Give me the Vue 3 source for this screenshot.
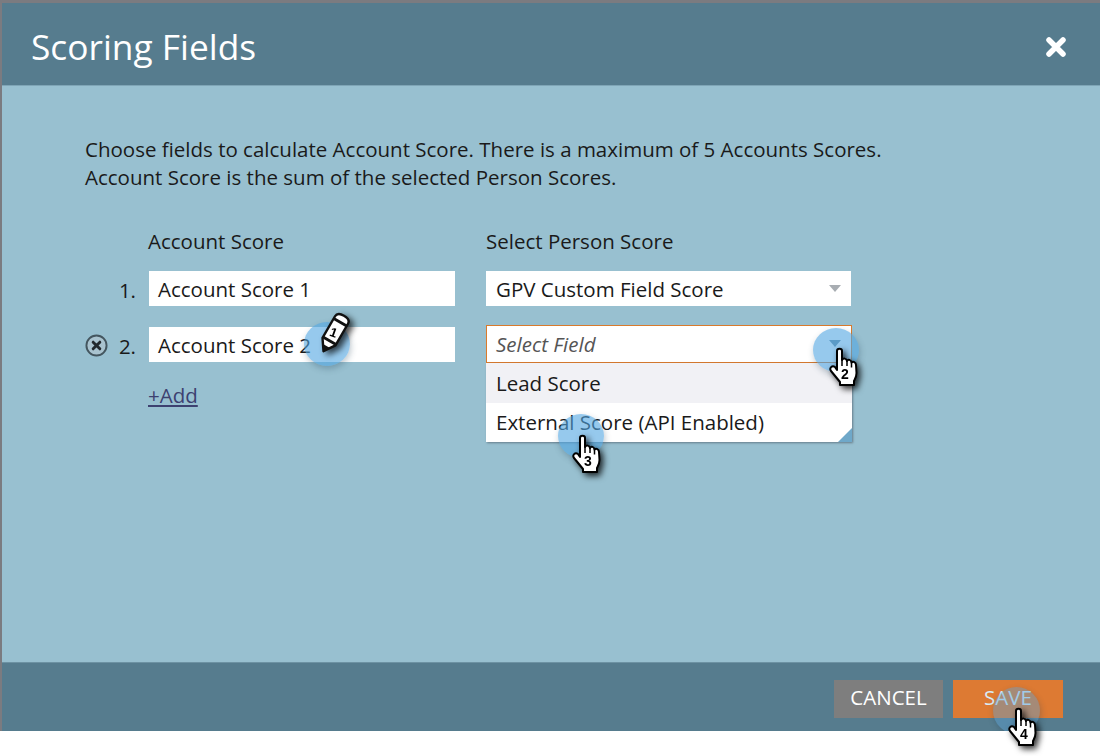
<script setup>
const fieldRows = [
  { n: '1.', value: 'Account Score 1', removable: false },
  { n: '2.', value: 'Account Score 2', removable: true },
]
const handPath = 'M8 4C8 1 13 1 13 4V13C14 11 17.500 11 18 14C19 12 22 12.500 22.500 15.500C24 14 27 15 27 18L27.500 26C27.500 30 26 32 25 34V38H11V35L2 24C0 21 3 18 6 20L8 23Z'
const hands = [
  { cls: 'hand-two', label: '2' },
  { cls: 'hand-three', label: '3' },
  { cls: 'hand-four', label: '4' },
]
</script>

<template>
  <div class="page">
    <div class="dialog">
      <header class="head">
        <h1 class="title">Scoring Fields</h1>
        <svg class="close" viewBox="0 0 22 22" aria-label="Close">
          <path d="M4 4 18 18M18 4 4 18" stroke="#fff" stroke-width="5.500" stroke-linecap="round" />
        </svg>
      </header>

      <main class="body">
        <p class="intro">
          Choose fields to calculate Account Score. There is a maximum of 5 Accounts Scores.<br />
          Account Score is the sum of the selected Person Scores.
        </p>

        <div class="form">
          <div class="col-left">
            <div class="label label-left">Account Score</div>
            <div v-for="row in fieldRows" :key="row.n" class="row">
              <svg v-if="row.removable" class="remove" viewBox="0 0 24 24">
                <circle cx="12" cy="12" r="10.500" fill="#a9c3cf" stroke="#44565f" stroke-width="2" />
                <path d="M8.500 8.500l7 7M15.500 8.500l-7 7" stroke="#22292e" stroke-width="3" stroke-linecap="round" />
              </svg>
              <span class="num">{{ row.n }}</span>
              <div class="input">{{ row.value }}</div>
            </div>
            <a class="add">+Add</a>
          </div>

          <div class="col-right">
            <div class="label">Select Person Score</div>
            <div class="select">
              <span>GPV Custom Field Score</span>
              <i class="caret"></i>
            </div>
            <div class="select select-open">
              <em>Select Field</em>
              <i class="caret"></i>
            </div>
            <ul class="menu">
              <li class="opt opt-hover">Lead Score</li>
              <li class="opt">External Score (API Enabled)</li>
              <li class="corner"></li>
            </ul>
          </div>
        </div>
      </main>

      <footer class="foot">
        <button class="btn cancel">CANCEL</button>
        <button class="btn save">SAVE</button>
      </footer>

      <span class="spot spot-one"></span>
      <span class="spot spot-two"></span>
      <span class="spot spot-three"></span>
      <span class="spot spot-four"></span>
    </div>

    <div class="pencil">
      <svg viewBox="0 0 36 44" width="36" height="44">
        <g transform="rotate(30 18 22)">
          <path d="M10.500 7c0-4 3.500-5 7.500-5s7.500 1 7.500 5v25l-7.500 11-7.500-11z" fill="#fff" stroke="#111" stroke-width="2.400" stroke-linejoin="round" />
          <path d="M10.500 9.500h15M10.500 31h15" stroke="#111" stroke-width="2.800" />
          <path d="M14 37l4 6 4-6z" fill="#111" />
        </g>
      </svg>
      <span class="pencil-num">1</span>
    </div>

    <div v-for="h in hands" :key="h.label" class="hand" :class="h.cls">
      <svg viewBox="0 0 30 40" width="30" height="40">
        <path :d="handPath" fill="#fff" stroke="#000" stroke-width="2" stroke-linejoin="round" />
        <path d="M13 13v6M18 14v5M22.500 15.500v5" stroke="#000" stroke-width="1.500" />
      </svg>
      <span class="hand-num">{{ h.label }}</span>
    </div>
  </div>
</template>

<style>
html, body { margin: 0; background: #fff; }
</style>

<style scoped>
.page {
  position: relative;
  width: 1100px;
  height: 756px;
  overflow: hidden;
  background: #fff;
  font-family: "Open Sans", "Liberation Sans", sans-serif;
  color: #1a1a1a;
}
.dialog {
  position: relative;
  overflow: hidden;
  box-sizing: border-box;
  width: 1100px;
  height: 731px;
  padding: 3px 0 0 2px;
  background: #7b7b80;
  display: flex;
  flex-direction: column;
}
.head {
  height: 83px;
  flex: none;
  background: #567c8e;
  display: flex;
  align-items: center;
  justify-content: space-between;
  padding: 5px 33px 0 29px;
  border-bottom: 1px solid #7fa5b6;
  box-sizing: border-box;
}
.title {
  margin: 0;
  font-size: 35.300px;
  font-weight: 400;
  color: #fff;
  line-height: 1;
}
.close { width: 22px; height: 22px; }
.body {
  flex: 1;
  background: #98c0d0;
  padding: 49px 0 0 83px;
  box-sizing: border-box;
  min-height: 0;
}
.intro {
  margin: 0;
  font-size: 20.500px;
  line-height: 28px;
}
.form {
  display: flex;
  margin-top: 37px;
}
.col-left { width: 401px; flex: none; }
.col-right { width: 366px; flex: none; position: relative; }
.label {
  font-size: 20.500px;
  line-height: 26px;
  height: 28px;
  margin-bottom: 15px;
}
.label-left { padding-left: 63px; }
.row {
  position: relative;
  display: flex;
  align-items: center;
  height: 35px;
  margin-bottom: 21px;
}
.remove {
  position: absolute;
  left: 0;
  top: 7px;
  width: 23px;
  height: 23px;
}
.num {
  width: 64px;
  flex: none;
  box-sizing: border-box;
  padding: 2px 13px 0 0;
  text-align: right;
  font-size: 20.500px;
}
.input {
  width: 306px;
  height: 35px;
  box-sizing: border-box;
  background: #fff;
  padding-left: 9px;
  font-size: 20.500px;
  line-height: 37px;
}
.add {
  display: block;
  margin: -2px 0 0 63px;
  font-size: 20.500px;
  line-height: 28px;
  color: #3d4170;
  text-decoration: underline;
}
.select {
  position: relative;
  width: 365px;
  height: 35px;
  box-sizing: border-box;
  background: #fff;
  padding-left: 10px;
  font-size: 20.500px;
  line-height: 37px;
  margin-bottom: 19px;
}
.select em { color: #555; font-style: italic; }
.select-open {
  width: 366px;
  height: 38px;
  border: 1px solid #d97a2c;
  padding-left: 9px;
  margin-bottom: 0;
}
.caret {
  position: absolute;
  right: 10px;
  top: 14px;
  width: 0;
  height: 0;
  border-left: 6px solid transparent;
  border-right: 6px solid transparent;
  border-top: 7px solid #a8adb2;
}
.select-open .caret { border-top-color: #6d8da0; right: 10px; top: 14px; }
.menu {
  position: absolute;
  left: 0;
  top: 135px;
  width: 366px;
  margin: 0;
  padding: 0;
  list-style: none;
  background: #fff;
  box-shadow: 1px 1px 2px rgba(60, 70, 80, 0.55);
}
.opt {
  height: 39px;
  box-sizing: border-box;
  padding-left: 10px;
  font-size: 20.500px;
  line-height: 39px;
}
.opt-hover { background: #f1f1f5; height: 40px; line-height: 41px; }
.corner {
  position: absolute;
  right: 0;
  bottom: 0;
  width: 0;
  height: 0;
  border-left: 14px solid transparent;
  border-bottom: 14px solid #6fa8c9;
}
.foot {
  height: 69px;
  flex: none;
  background: #567c8e;
  display: flex;
  align-items: center;
  justify-content: flex-end;
  gap: 10px;
  padding: 3px 37px 0 0;
  box-sizing: border-box;
  border-top: 1px solid #6d92a3;
}
.btn {
  width: 109px;
  height: 38px;
  border: 0;
  padding: 0 0 3px;
  color: #fff;
  font-family: inherit;
  font-size: 20.500px;
}
.cancel { background: #7e7e7e; }
.save { background: #dd7a33; width: 110px; color: #d8ebf5; }

.spot {
  position: absolute;
  width: 46px;
  height: 44px;
  border-radius: 50%;
  background: rgba(80, 165, 225, 0.6);
  box-shadow: 1px 3px 6px rgba(40, 70, 90, 0.3);
}
.spot-one { left: 304px; top: 322px; }
.spot-two { left: 813px; top: 328px; }
.spot-three { left: 558px; top: 414px; }
.spot-four { left: 993px; top: 687px; width: 47px; height: 47px; background: rgba(88, 160, 215, 0.42); }

.pencil {
  position: absolute;
  left: 316px;
  top: 311px;
  width: 36px;
  height: 44px;
  filter: drop-shadow(4px 3px 3px rgba(0, 0, 0, 0.7));
}
.pencil-num {
  position: absolute;
  left: 14px;
  top: 14px;
  font: 700 13px "Liberation Sans", sans-serif;
  color: #000;
  transform: rotate(20deg);
}
.hand {
  position: absolute;
  width: 30px;
  height: 40px;
  filter: drop-shadow(3px 3px 3px rgba(0, 0, 0, 0.8));
}
.hand-two { left: 829px; top: 347px; }
.hand-three { left: 572px; top: 434px; }
.hand-four { left: 1008px; top: 707px; }
.hand-num {
  position: absolute;
  left: 12px;
  top: 19px;
  font: 700 14px "Liberation Sans", sans-serif;
  color: #000;
}
</style>
